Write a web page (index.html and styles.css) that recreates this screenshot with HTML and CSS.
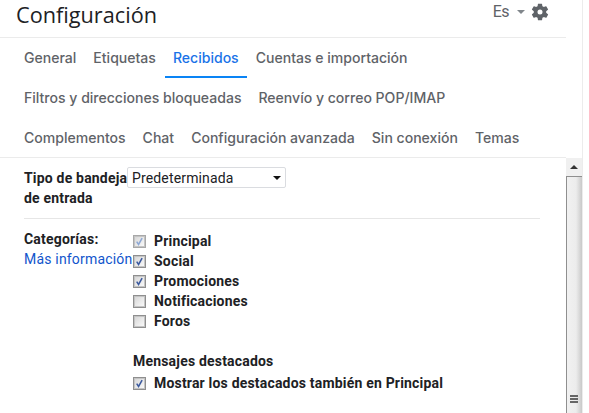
FILE: index.html
```html
<!DOCTYPE html>
<html lang="es">
<head>
<meta charset="utf-8">
<title>Configuración</title>
<link rel="stylesheet" href="styles.css">
</head>
<body>
<svg class="defs" width="0" height="0" aria-hidden="true">
  <symbol id="check" viewBox="0 0 13 13"><path d="M3.2 6.6 L5.4 10 L9.6 2.6" fill="none" stroke="currentColor" stroke-width="1.8"/></symbol>
</svg>
<div class="page">
  <div class="main">
    <header class="head">
      <h1 class="title">Configuración</h1>
      <div class="tools">
        <span class="lang">Es</span>
        <span class="caret"></span>
        <svg class="gear" viewBox="0 0 24 24"><path fill="#5f6368" fill-rule="evenodd" d="M19.4 13c.04-.32.07-.66.07-1s-.03-.68-.07-1l2.11-1.65c.19-.15.24-.42.12-.64l-2-3.46c-.12-.22-.39-.3-.61-.22l-2.49 1c-.52-.4-1.08-.73-1.69-.98l-.38-2.65A.49.49 0 0 0 14 2h-4c-.25 0-.46.18-.49.42l-.38 2.65c-.61.25-1.17.59-1.69.98l-2.49-1c-.23-.09-.49 0-.61.22l-2 3.46c-.13.22-.07.49.12.64L4.57 11c-.04.32-.07.66-.07 1s.03.68.07 1l-2.11 1.65c-.19.15-.24.42-.12.64l2 3.46c.12.22.39.3.61.22l2.49-1c.52.4 1.08.73 1.69.98l.38 2.65c.03.24.24.42.49.42h4c.25 0 .46-.18.49-.42l.38-2.65c.61-.25 1.17-.59 1.69-.98l2.49 1c.23.09.49 0 .61-.22l2-3.46c.12-.22.07-.49-.12-.64L19.4 13zM12 15a3 3 0 1 1 0-6 3 3 0 0 1 0 6z"/></svg>
      </div>
    </header>
    <nav class="tabs">
      <div class="tabrow">
        <a class="tab">General</a>
        <a class="tab">Etiquetas</a>
        <a class="tab active">Recibidos</a>
        <a class="tab">Cuentas e importación</a>
      </div>
      <div class="tabrow">
        <a class="tab">Filtros y direcciones bloqueadas</a>
        <a class="tab">Reenvío y correo POP/IMAP</a>
      </div>
      <div class="tabrow">
        <a class="tab">Complementos</a>
        <a class="tab">Chat</a>
        <a class="tab">Configuración avanzada</a>
        <a class="tab">Sin conexión</a>
        <a class="tab">Temas</a>
      </div>
    </nav>
    <section class="settings">
      <div class="row first">
        <div class="label">Tipo de bandeja de entrada</div>
        <div class="value">
          <div class="selectwrap">
            <select class="select"><option>Predeterminada</option></select>
            <span class="selectarrow"></span>
          </div>
        </div>
      </div>
      <div class="row second">
        <div class="label">
          Categorías:
          <a class="more">Más información</a>
        </div>
        <div class="value">
          <div class="checks">
            <div class="check"><span class="box dim"><svg><use href="#check"/></svg></span>Principal</div>
            <div class="check"><span class="box"><svg><use href="#check"/></svg></span>Social</div>
            <div class="check"><span class="box"><svg><use href="#check"/></svg></span>Promociones</div>
            <div class="check"><span class="box"></span>Notificaciones</div>
            <div class="check"><span class="box"></span>Foros</div>
          </div>
          <div class="subhead">Mensajes destacados</div>
          <div class="check"><span class="box"><svg><use href="#check"/></svg></span>Mostrar los destacados también en Principal</div>
        </div>
      </div>
    </section>
  </div>
  <div class="rail">
    <div class="spacer"></div>
    <div class="bar">
      <div class="up"><span class="uparrow"></span></div>
      <div class="thumb"><div class="grip"><i></i><i></i><i></i></div></div>
    </div>
  </div>
</div>
</body>
</html>
```
FILE: styles.css
```css
* { box-sizing: border-box; }
html, body { margin: 0; height: 100%; overflow: hidden; background: #fff; }
body { font-family: Roboto, "Liberation Sans", sans-serif; color: #202124; }
.defs { position: absolute; }
.page { display: flex; width: 583px; height: 413px; border-right: 1px solid #ececec; }
.main { width: 566px; flex: none; overflow: hidden; }

.head { height: 38px; display: flex; justify-content: space-between; align-items: flex-start; padding: 0 16px 0 16px; border-bottom: 1px solid #ebebeb; }
.title { margin: 0; font: 400 21.7px/29px "Open Sans", sans-serif; color: #202124; }
.tools { display: flex; align-items: center; height: 23px; color: #5f6368; }
.lang { font: 400 16px/24px Roboto, sans-serif; letter-spacing: -0.5px; margin-right: 1px; }
.caret { width: 0; height: 0; margin: 0 5px 0 7px; border: 4px solid transparent; border-top-color: #80868b; border-bottom: 0; }
.gear { width: 20px; height: 20px; }

.tabs { height: 120px; padding-left: 16px; border-bottom: 1px solid #ebebeb; }
.tabrow { display: flex; gap: 1px; height: 40px; }
.tab { display: flex; align-items: center; height: 40px; padding: 2px 8px 0; font: 500 14.05px/20px Inter, Roboto, sans-serif; color: #5f6368; white-space: nowrap; border-bottom: 2px solid transparent; }
.tab.active { color: #1a73e8; border-bottom-color: #0a84f5; }

.settings { padding: 10px 26px 0 24px; font-size: 14px; line-height: 20px; letter-spacing: .19px; }
.row { display: flex; }
.first { padding-bottom: 10px; border-bottom: 1px solid #e6e6e6; }
.second { padding-top: 10px; }
.label { width: 109px; flex: none; font-weight: 700; color: #202124; }
.value { flex: 1; }
.more { display: block; white-space: nowrap; font-weight: 400; color: #1155cc; }
.selectwrap { position: relative; width: 159px; height: 21px; margin: -1px 0 0 -6px; }
.select { display: block; width: 100%; height: 100%; padding: 0 0 0 4px; appearance: none; font: 400 14px Roboto, sans-serif; letter-spacing: .15px; color: #202124; background: #fff; border: 1px solid #dadce0; border-radius: 2px; }
.selectarrow { position: absolute; right: 5px; top: 9px; width: 0; height: 0; border: 4px solid transparent; border-top-color: #111; border-bottom: 0; }

.check { display: flex; align-items: center; height: 20px; font-weight: 700; white-space: nowrap; }
.box { flex: none; width: 13px; height: 13px; margin: 0 8px 0 0; border: 1px solid #8f8f8f; box-shadow: inset 0 0 0 1px #c4c4c4; background: linear-gradient(135deg, #d4d4d4, #fdfdfd); color: #3c5a9e; }
.box.dim { color: #8ea8d4; border-color: #a8a8a8; }
.box svg { display: block; width: 11px; height: 11px; }
.checks { padding-top: 2px; margin-bottom: 20px; }
.subhead { font-weight: 700; margin-bottom: 2px; }

.rail { width: 16px; flex: none; display: flex; flex-direction: column; }
.spacer { height: 158px; }
.bar { flex: 1; display: flex; flex-direction: column; background: #f1f1f1; }
.up { height: 18px; display: flex; align-items: center; justify-content: center; background: #f0f0f0; }
.uparrow { width: 0; height: 0; border: 4px solid transparent; border-bottom: 4px solid #333; border-top: 0; }
.thumb { flex: 1; position: relative; border-left: 1px solid #8f8f8f; border-top: 1px solid #8f8f8f; background: linear-gradient(90deg, #f1f1f1, #ececec 60%, #c9c9c9); }
.grip { position: absolute; left: 3px; bottom: 10px; width: 8px; display: flex; flex-direction: column; gap: 1px; }
.grip i { display: block; height: 2px; background: #666; }
```
